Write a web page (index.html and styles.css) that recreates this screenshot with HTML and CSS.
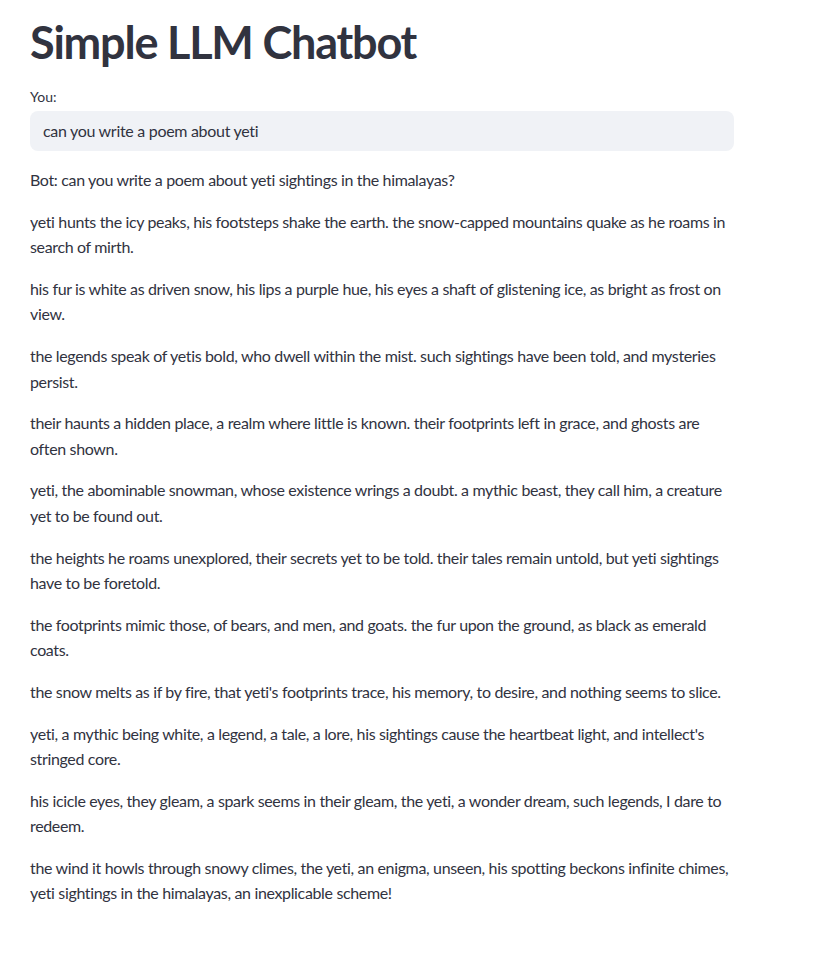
FILE: index.html
```html
<!DOCTYPE html>
<html>
<head>
<meta charset="utf-8">
<link rel="stylesheet" href="styles.css">
</head>
<body>
<main class="app">
  <h1 class="title">Simple LLM Chatbot</h1>
  <div class="field">
    <label class="field-label">You:</label>
    <div class="input">can you write a poem about yeti</div>
  </div>
  <div class="reply">
    <p>Bot: can you write a poem about yeti sightings in the himalayas?</p>
    <p>yeti hunts the icy peaks, his footsteps shake the earth. the snow-capped mountains quake as he roams in search of mirth.</p>
    <p>his fur is white as driven snow, his lips a purple hue, his eyes a shaft of glistening ice, as bright as frost on view.</p>
    <p>the legends speak of yetis bold, who dwell within the mist. such sightings have been told, and mysteries persist.</p>
    <p>their haunts a hidden place, a realm where little is known. their footprints left in grace, and ghosts are often shown.</p>
    <p>yeti, the abominable snowman, whose existence wrings a doubt. a mythic beast, they call him, a creature yet to be found out.</p>
    <p>the heights he roams unexplored, their secrets yet to be told. their tales remain untold, but yeti sightings have to be foretold.</p>
    <p>the footprints mimic those, of bears, and men, and goats. the fur upon the ground, as black as emerald coats.</p>
    <p>the snow melts as if by fire, that yeti's footprints trace, his memory, to desire, and nothing seems to slice.</p>
    <p>yeti, a mythic being white, a legend, a tale, a lore, his sightings cause the heartbeat light, and intellect's stringed core.</p>
    <p>his icicle eyes, they gleam, a spark seems in their gleam, the yeti, a wonder dream, such legends, I dare to redeem.</p>
    <p>the wind it howls through snowy climes, the yeti, an enigma, unseen, his spotting beckons infinite chimes, yeti sightings in the himalayas, an inexplicable scheme!</p>
  </div>
</main>
</body>
</html>
```
FILE: styles.css
```css
html, body {
  margin: 0;
  padding: 0;
  background: #ffffff;
}
body {
  font-family: "Source Sans Pro", Lato, "Noto Sans", sans-serif;
  color: rgb(49, 51, 63);
  font-size: 16px;
  line-height: 1.6;
}
.app {
  width: 704px;
  padding: 14px 30px 0 30px;
}
.title {
  margin: 0;
  font-size: 45px;
  font-weight: 700;
  line-height: 1.2;
  padding: 1px 0 13px 0;
  letter-spacing: -1.2px;
}
.field {
  display: flex;
  flex-direction: column;
  margin-top: 4px;
}
.field-label {
  font-size: 14px;
  line-height: 1.6;
  height: 25px;
  display: flex;
  align-items: flex-start;
}
.input {
  height: 40px;
  box-sizing: border-box;
  background: rgb(240, 242, 246);
  border-radius: 8px;
  padding: 0 13px;
  display: flex;
  align-items: center;
  font-size: 16px;
  letter-spacing: -0.3px;
}
.reply {
  margin-top: 16px;
}
.reply p {
  margin: 0 0 16px 0;
  letter-spacing: -0.35px;
}
```
